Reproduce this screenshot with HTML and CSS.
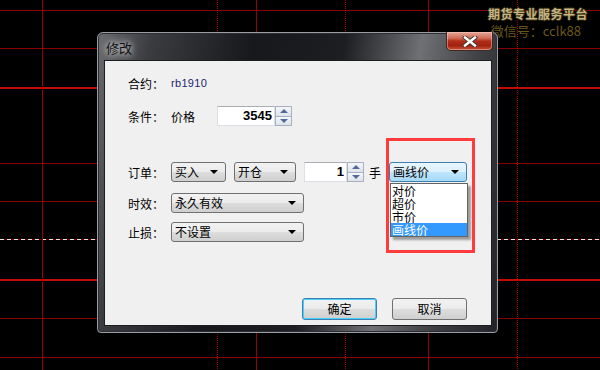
FILE: index.html
```html
<!DOCTYPE html>
<html lang="zh-CN">
<head>
  <meta charset="UTF-8" />
  <title>修改</title>
  <link rel="stylesheet" href="styles.css">
</head>
<body>

  <div class="chart">
    <div class="hline" style="top: 10px;"></div>
    <div class="hline" style="top: 48px;"></div>
    <div class="hline thick" style="top: 87px;"></div>
    <div class="hline" style="top: 163px;"></div>
    <div class="hline" style="top: 201px;"></div>
    <div class="hline dashed" style="top: 239px;"></div>
    <div class="hline thick" style="top: 279px;"></div>
    <div class="hline" style="top: 318px;"></div>
    <div class="hline" style="top: 357px;"></div>

    <div class="vline" style="left: 42px;"></div>
    <div class="vline dotted" style="left: 217px;"></div>
    <div class="vline" style="left: 256px;"></div>
    <div class="vline dotted" style="left: 345px;"></div>
    <div class="vline" style="left: 428px;"></div>
    <div class="vline dotted" style="left: 517px;"></div>

    <div class="watermark">
      <div class="wm-title">期货专业服务平台</div>
      <div class="wm-sub">微信号：cclk88</div>
    </div>
  </div>

  <div class="dialog">
    <div class="titlebar">
      <span class="title">修改</span>
      <div class="close">
        <svg width="18" height="11" viewBox="0 0 18 11">
          <path d="M4 1.5 L14 9.5 M14 1.5 L4 9.5" stroke="#3a3a3a" stroke-width="4.2" stroke-linecap="square" fill="none"/>
          <path d="M4 1.5 L14 9.5 M14 1.5 L4 9.5" stroke="#fff" stroke-width="2.4" stroke-linecap="square" fill="none"/>
        </svg>
      </div>
    </div>

    <div class="client">
      <div class="row row-contract">
        <span class="lbl">合约：</span>
        <span class="code">rb1910</span>
      </div>

      <div class="row row-cond">
        <span class="lbl">条件：</span>
        <span class="val">价格</span>
        <div class="num num-price">3545</div>
        <div class="spin"><span class="up"></span><span class="down"></span></div>
      </div>

      <div class="row row-order">
        <span class="lbl">订单：</span>
        <div class="combo w-side">买入<i class="arrow"></i></div>
        <div class="combo w-open">开仓<i class="arrow"></i></div>
        <div class="num num-qty">1</div>
        <div class="spin"><span class="up"></span><span class="down"></span></div>
        <span class="unit">手</span>
        <div class="combo w-type active">画线价<i class="arrow"></i></div>
      </div>

      <div class="row row-expire">
        <span class="lbl">时效：</span>
        <div class="combo w-long">永久有效<i class="arrow"></i></div>
      </div>

      <div class="row row-stop">
        <span class="lbl">止损：</span>
        <div class="combo w-long">不设置<i class="arrow"></i></div>
      </div>

      <div class="actions">
        <button class="btn btn-default">确定</button>
        <button class="btn">取消</button>
      </div>

      <ul class="droplist">
        <li>对价</li>
        <li>超价</li>
        <li>市价</li>
        <li class="selected">画线价</li>
      </ul>

      <div class="highlight-box"></div>
    </div>
  </div>

</body>
</html>
```

FILE: styles.css
```css
/* Chart backdrop + Win7 style dialog */
:root {
  --grid-red: #8a0000;
  --grid-bright: #c40c0c;
  --face: #f0f0f0;
  --text: #000;
  --ui-font: "Noto Sans CJK SC", "Liberation Sans", sans-serif;
}

html, body {
  margin: 0;
  padding: 0;
}

body {
  width: 600px;
  height: 370px;
  background: #000;
  overflow: hidden;
  position: relative;
  font-family: var(--ui-font);
  font-size: 12px;
  color: var(--text);
}

/* chart grid */
.chart {
  position: absolute;
  inset: 0;
}

.hline {
  position: absolute;
  left: 0;
  width: 100%;
  height: 1px;
  background: var(--grid-red);
}

.hline.thick {
  height: 2px;
  background: var(--grid-bright);
}

.hline.dashed {
  background: repeating-linear-gradient(to right, #e8e8e8 0 4px, #7a0000 4px 7px);
}

.vline {
  position: absolute;
  top: 0;
  width: 1px;
  height: 100%;
  background: #960000;
}

.vline.dotted {
  background: repeating-linear-gradient(to bottom, #b00000 0 1px, transparent 1px 2px);
}

.watermark {
  position: absolute;
  top: 6px;
  right: 12px;
  text-align: right;
  font-weight: 700;
}

.wm-title {
  font-size: 12px;
  line-height: 15px;
  letter-spacing: 0.5px;
  color: #c4b588;
  text-shadow: -1px 0 #3a3010, 1px 0 #3a3010, 0 -1px #3a3010, 0 1px #3a3010;
}

.wm-sub {
  font-size: 13px;
  line-height: 16px;
  margin-top: 2px;
  margin-right: 7px;
  font-weight: 400;
  color: #6a561a;
}

/* dialog window */
.dialog {
  position: absolute;
  left: 97px;
  top: 32px;
  width: 401px;
  height: 301px;
  box-sizing: border-box;
  border: 1px solid #9a9ea4;
  border-radius: 6px 6px 4px 4px;
  padding: 0 5px 6px 6px;
  background:
    linear-gradient(100deg, #6a6c70 0%, #3a3c40 12%, #17181b 35%, #1d1e21 55%, #6e7074 72%, #3c3e42 86%, #222326 100%);
  box-shadow: inset 0 0 0 1px #2c2e31;
}

.titlebar {
  height: 27px;
  display: flex;
  align-items: center;
  justify-content: space-between;
  position: relative;
}

.title {
  font-size: 13px;
  color: #111;
  margin-left: 2px;
  margin-top: 1px;
  text-shadow: 0 0 6px rgba(255, 255, 255, 0.85), 0 0 10px rgba(255, 255, 255, 0.6);
}

.close {
  position: absolute;
  top: -1px;
  right: -1px;
  width: 47px;
  height: 19px;
  box-sizing: border-box;
  border: 1px solid #3a2a28;
  border-top: none;
  border-radius: 0 0 5px 5px;
  background: linear-gradient(to bottom, #e4a89a 0%, #cf6a55 35%, #b02d1a 50%, #a3220f 75%, #c4533a 100%);
  box-shadow: inset 0 0 0 1px rgba(255, 210, 200, 0.45);
  display: flex;
  align-items: center;
  justify-content: center;
}

.client {
  position: relative;
  box-sizing: border-box;
  width: 388px;
  height: 266px;
  background: var(--face);
  border: 1px solid #1c1d1f;
  padding: 12px 24px 0 23px;
}

.row {
  display: flex;
  align-items: center;
  height: 20px;
}

.row-cond { margin-top: 13px; }
.row-order { margin-top: 36px; }
.row-expire { margin-top: 11px; }
.row-stop { margin-top: 9px; }

.lbl {
  width: 43px;
  flex: none;
}

.code {
  font-family: "Liberation Sans", sans-serif;
  font-size: 11px;
  color: #1e1e6e;
  letter-spacing: 0.3px;
}

.val {
  width: 46px;
}

/* numeric fields */
.num {
  box-sizing: border-box;
  height: 20px;
  background: #fff;
  border: 1px solid #dcdfe6;
  border-top-color: #abadb3;
  text-align: right;
  padding-right: 2px;
  font-family: "Liberation Sans", sans-serif;
  font-weight: 700;
  font-size: 13px;
  line-height: 18px;
}

.num-price { width: 58px; }
.num-qty { width: 45px; }

.spin {
  width: 17px;
  height: 20px;
  display: flex;
  flex-direction: column;
  flex: none;
}

.spin span {
  flex: 1;
  box-sizing: border-box;
  border: 1px solid #a9b0bd;
  background: linear-gradient(to bottom, #f4f6f9, #dde3ec);
  position: relative;
}

.spin .down {
  border-top: none;
}

.spin span::before {
  content: "";
  position: absolute;
  left: 4px;
  top: 2px;
  border-left: 4px solid transparent;
  border-right: 4px solid transparent;
}

.spin .up::before {
  border-bottom: 4px solid #4f6a9a;
}

.spin .down::before {
  top: 2px;
  border-top: 4px solid #4f6a9a;
}

.unit {
  margin-left: 5px;
  margin-right: 8px;
}

/* combo boxes */
.combo {
  box-sizing: border-box;
  height: 20px;
  border: 1px solid #707070;
  border-radius: 3px;
  background: linear-gradient(to bottom, #f2f2f2 0%, #ebebeb 50%, #dddddd 51%, #cfcfcf 100%);
  padding-left: 3px;
  line-height: 18px;
  position: relative;
  margin-right: 8px;
  flex: none;
}

.combo .arrow {
  position: absolute;
  right: 7px;
  top: 7px;
  border-left: 4px solid transparent;
  border-right: 4px solid transparent;
  border-top: 4px solid #000;
}

.combo.active {
  border-color: #3c7fb1;
  background: linear-gradient(to bottom, #eaf6fd 0%, #d9f0fc 50%, #bee6fd 51%, #a7d9f5 100%);
  margin-right: 0;
}

.w-side { width: 55px; }
.w-open { width: 62px; }
.w-type { width: 78px; }
.w-long { width: 133px; margin-right: 0; }

/* bottom buttons */
.actions {
  display: flex;
  justify-content: flex-end;
  gap: 15px;
  margin-top: 56px;
}

.btn {
  width: 75px;
  height: 22px;
  box-sizing: border-box;
  border: 1px solid #707070;
  border-radius: 3px;
  background: linear-gradient(to bottom, #f2f2f2 0%, #ebebeb 50%, #dddddd 51%, #cfcfcf 100%);
  font-family: var(--ui-font);
  font-size: 12px;
  color: #000;
  padding: 0;
  line-height: 18px;
}

.btn-default {
  border-color: #3c7fb1;
  box-shadow: inset 0 0 0 1px #48d0f8;
}

/* opened dropdown, rows are tight like the native list */
.droplist {
  position: absolute;
  left: 285px;
  top: 122px;
  width: 78px;
  margin: 0;
  padding: 0;
  list-style: none;
  background: #fff;
  border: 1px solid #646464;
  box-sizing: border-box;
  box-shadow: 3px 3px 2px rgba(0, 0, 0, 0.35);
}

.droplist li {
  height: 13px;
  line-height: 13px;
  padding-left: 1px;
}

.droplist li.selected {
  background: #3399ff;
  color: #fff;
}

.highlight-box {
  position: absolute;
  left: 281px;
  top: 77px;
  width: 89px;
  height: 115px;
  box-sizing: border-box;
  border: 3px solid #ff3b3b;
}
```
